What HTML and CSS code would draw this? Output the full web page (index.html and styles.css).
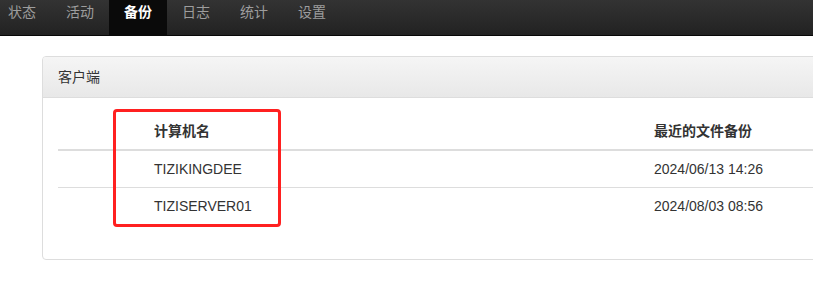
FILE: index.html
```html
<!DOCTYPE html>
<html lang="zh-CN">
<head>
  <meta charset="UTF-8" />
  <meta name="viewport" content="width=device-width, initial-scale=1" />
  <title>备份</title>
  <link rel="stylesheet" href="styles.css">
</head>
<body>
  <div class="navbar">
    <ul class="nav">
      <li><a href="#">状态</a></li>
      <li><a href="#">活动</a></li>
      <li class="active"><a href="#">备份</a></li>
      <li><a href="#">日志</a></li>
      <li><a href="#">统计</a></li>
      <li><a href="#">设置</a></li>
    </ul>
  </div>

  <div class="container">
    <div class="panel">
      <div class="panel-heading">客户端</div>
      <div class="panel-body">
        <table class="table">
          <colgroup>
            <col class="col-blank">
            <col class="col-name">
            <col>
          </colgroup>
          <thead>
            <tr>
              <th></th>
              <th>计算机名</th>
              <th>最近的文件备份</th>
            </tr>
          </thead>
          <tbody>
            <tr>
              <td></td>
              <td>TIZIKINGDEE</td>
              <td>2024/06/13 14:26</td>
            </tr>
            <tr>
              <td></td>
              <td>TIZISERVER01</td>
              <td>2024/08/03 08:56</td>
            </tr>
          </tbody>
        </table>
      </div>
      <div class="highlight"></div>
    </div>
  </div>
</body>
</html>
```

FILE: styles.css
```css
body {
  margin: 0;
  font-family: "Liberation Sans", Arial, "Noto Sans CJK SC", sans-serif;
  font-size: 14px;
  line-height: 20px;
  color: #333;
  background: #fff;
  overflow: hidden;
}
.navbar {
  height: 35px;
  background: linear-gradient(#333, #222);
  border-bottom: 1px solid #080808;
}
.nav {
  list-style: none;
  margin: 0 0 0 -7px;
  padding: 0;
  display: flex;
}
.nav a {
  display: block;
  height: 33px;
  padding: 2px 15px 0;
  color: #9d9d9d;
  text-decoration: none;
}
.nav .active a {
  background: #0a0a0a;
  color: #fff;
  font-weight: bold;
}
.container {
  padding: 20px 0 0 42px;
}
.panel {
  position: relative;
  width: 1000px;
  border: 1px solid #ddd;
  border-radius: 4px;
}
.panel-heading {
  padding: 10px 15px;
  background: linear-gradient(#f5f5f5, #e8e8e8);
  border-bottom: 1px solid #ddd;
  border-radius: 3px 3px 0 0;
}
.panel-body {
  padding: 15px;
}
.table {
  width: 100%;
  table-layout: fixed;
  border-collapse: collapse;
  margin-bottom: 20px;
}
.col-blank {
  width: 88px;
}
.col-name {
  width: 500px;
}
.table th,
.table td {
  padding: 8px;
  text-align: left;
  vertical-align: top;
}
.table th {
  font-weight: bold;
  border-bottom: 2px solid #ddd;
}
.table tbody tr + tr td {
  border-top: 1px solid #ddd;
}
.highlight {
  position: absolute;
  left: 70px;
  top: 52px;
  width: 162px;
  height: 112px;
  border: 3px solid #ff2020;
  border-radius: 4px;
}
```
